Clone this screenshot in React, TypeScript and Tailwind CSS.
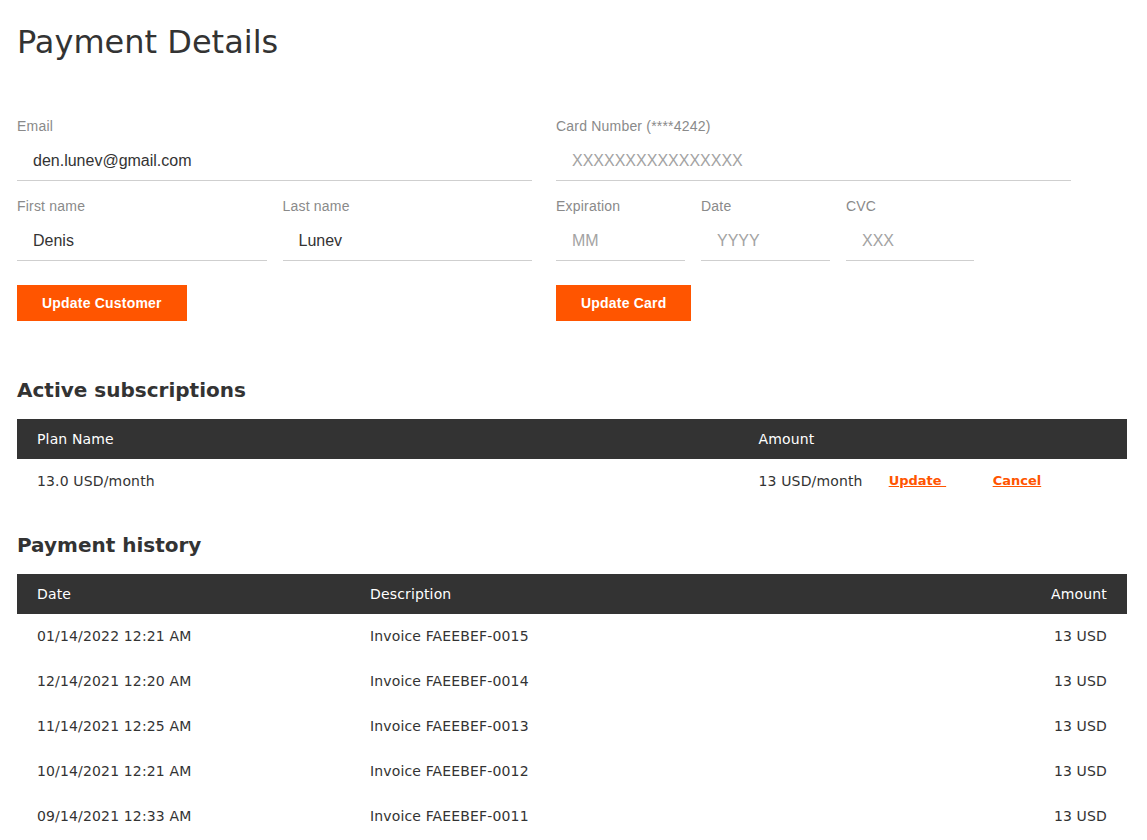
import React from "react";

const payments = [
  { date: "01/14/2022 12:21 AM", description: "Invoice FAEEBEF-0015", amount: "13 USD" },
  { date: "12/14/2021 12:20 AM", description: "Invoice FAEEBEF-0014", amount: "13 USD" },
  { date: "11/14/2021 12:25 AM", description: "Invoice FAEEBEF-0013", amount: "13 USD" },
  { date: "10/14/2021 12:21 AM", description: "Invoice FAEEBEF-0012", amount: "13 USD" },
  { date: "09/14/2021 12:33 AM", description: "Invoice FAEEBEF-0011", amount: "13 USD" },
];

const sans = "font-['Liberation_Sans',Arial,sans-serif]";
const grande = "font-['DejaVu_Sans',Verdana,sans-serif]";

function Field({
  label,
  value,
  placeholder,
  className = "",
}: {
  label: string;
  value?: string;
  placeholder?: string;
  className?: string;
}) {
  return (
    <label className={`flex flex-col ${className}`}>
      <span className="h-5 text-[14px] leading-5 tracking-[0.2px] text-[#8a8a8a]">{label}</span>
      <input
        className="mt-[5px] h-10 w-full border-b border-[#cfcfcf] px-4 pt-px text-[16px] text-[#333] outline-none placeholder:text-[#a3a3a3]"
        defaultValue={value}
        placeholder={placeholder}
      />
    </label>
  );
}

function Button({ children }: { children: React.ReactNode }) {
  return (
    <button className="mt-6 h-9 self-start bg-[#ff5500] px-[25px] pt-px text-[14px] font-bold tracking-[0.2px] text-white">
      {children}
    </button>
  );
}

export default function App() {
  return (
    <div className={`min-h-screen bg-white pl-[17px] pr-[20px] pt-[22px] text-[#333] ${sans}`}>
      <h1 className={`text-[32px] leading-10 text-[#333] ${grande}`}>Payment Details</h1>

      <div className="mt-[54px] flex gap-6">
        <div className="flex w-[515px] flex-col">
          <Field label="Email" value="den.lunev@gmail.com" />
          <div className="mt-[15px] flex gap-4">
            <Field label="First name" value="Denis" className="flex-1" />
            <Field label="Last name" value="Lunev" className="flex-1" />
          </div>
          <Button>Update Customer</Button>
        </div>

        <div className="flex w-[515px] flex-col">
          <Field label="Card Number (****4242)" placeholder="XXXXXXXXXXXXXXXX" />
          <div className="mt-[15px] flex gap-4">
            <Field label="Expiration" placeholder="MM" className="w-[129px]" />
            <Field label="Date" placeholder="YYYY" className="w-[129px]" />
            <Field label="CVC" placeholder="XXX" className="w-[128px]" />
          </div>
          <Button>Update Card</Button>
        </div>
      </div>

      <section className={grande}>
        <h2 className="mt-[53px] text-[20px] font-bold leading-8 text-[#333]">Active subscriptions</h2>
        <table className="mt-[13px] w-full border-collapse text-[14px] tracking-[0.15px]">
          <thead>
            <tr className="h-10 bg-[#333] text-left text-white">
              <th className="w-[65%] pl-5 font-normal">Plan Name</th>
              <th className="pl-5 font-normal">Amount</th>
            </tr>
          </thead>
          <tbody>
            <tr className="h-11">
              <td className="pl-5">13.0 USD/month</td>
              <td className="pl-5">
                <div className="flex items-center">
                  <span>13 USD/month</span>
                  <a href="#" className="ml-[26px] w-[56px] text-[13px] font-bold tracking-normal text-[#ff5500] underline">
                    Update&nbsp;
                  </a>
                  <a href="#" className="ml-[48px] text-[13px] font-bold tracking-normal text-[#ff5500] underline">
                    Cancel
                  </a>
                </div>
              </td>
            </tr>
          </tbody>
        </table>

        <h2 className="mt-[26px] text-[20px] font-bold leading-8 text-[#333]">Payment history</h2>
        <table className="mt-[13px] w-full border-collapse text-[14px] tracking-[0.15px]">
          <thead>
            <tr className="h-10 bg-[#333] text-white">
              <th className="w-[30%] pl-5 text-left font-normal">Date</th>
              <th className="pl-5 text-left font-normal">Description</th>
              <th className="pr-5 text-right font-normal">Amount</th>
            </tr>
          </thead>
          <tbody>
            {payments.map((p) => (
              <tr key={p.description} className="h-[45px]">
                <td className="pl-5">{p.date}</td>
                <td className="pl-5">{p.description}</td>
                <td className="pr-5 text-right">{p.amount}</td>
              </tr>
            ))}
          </tbody>
        </table>
      </section>
    </div>
  );
}
